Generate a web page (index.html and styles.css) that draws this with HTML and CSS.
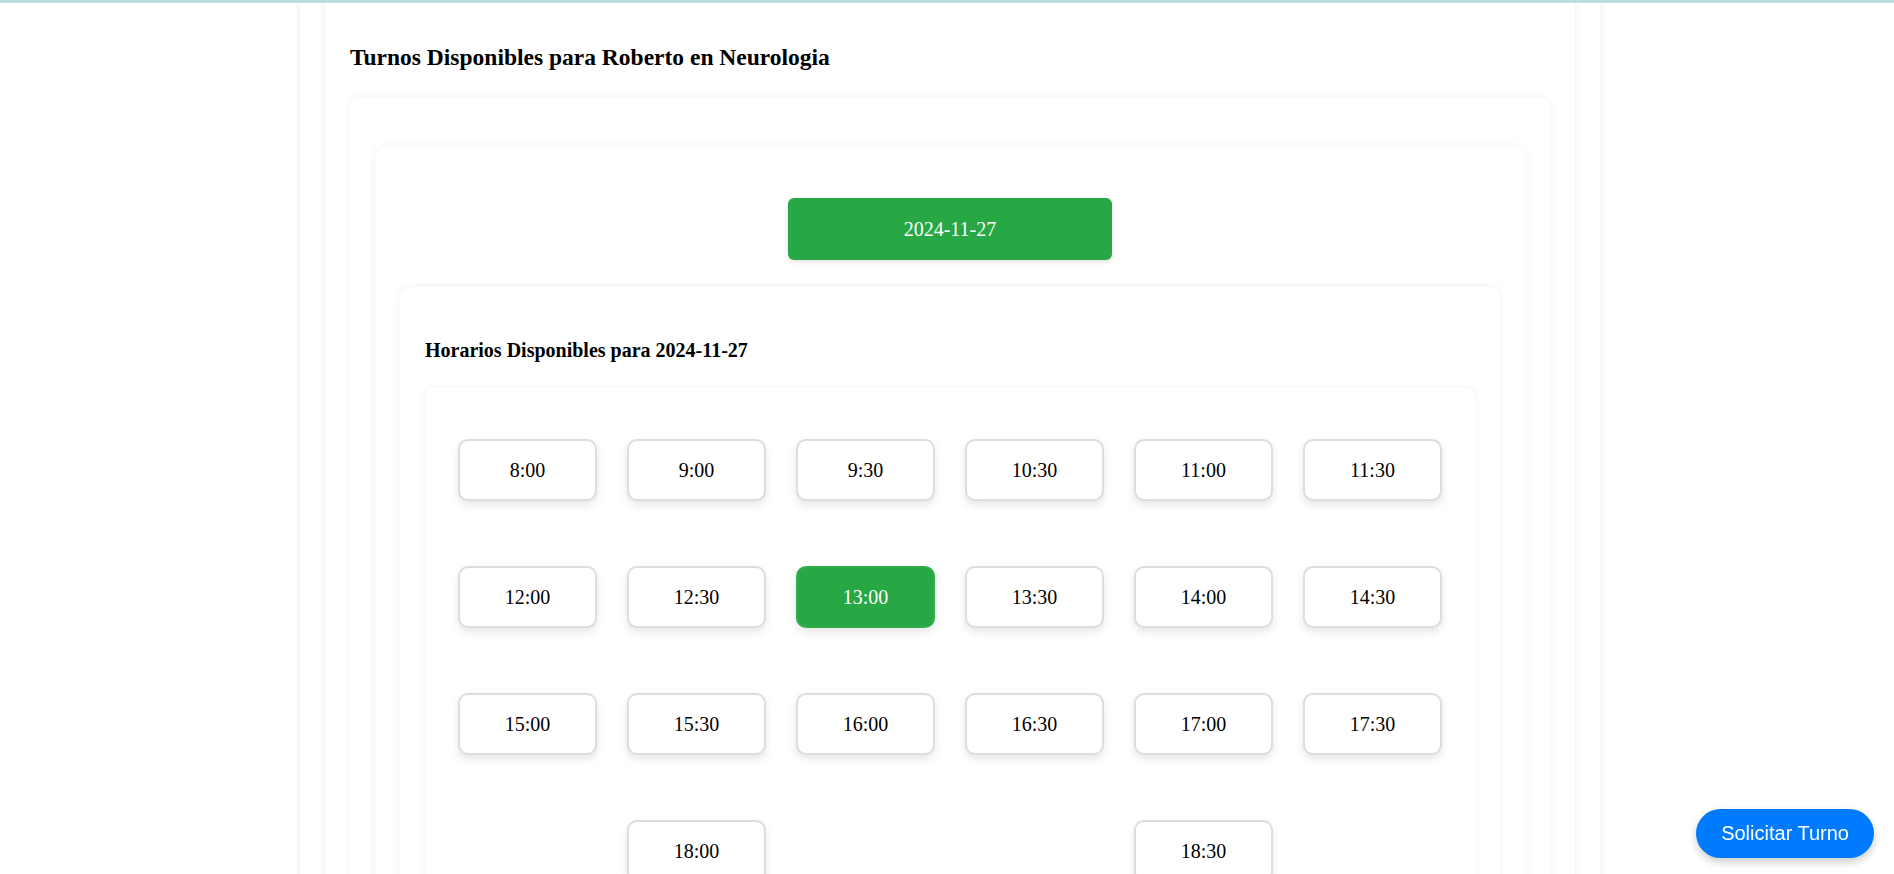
FILE: index.html
```html
<!DOCTYPE html>
<html lang="es">
<head>
<meta charset="utf-8">
<title>Turnos Disponibles</title>
<link rel="stylesheet" href="styles.css">
</head>
<body>
<div class="topbar"></div>
<div class="outer">
  <div class="inner">
    <h2 class="title">Turnos Disponibles para Roberto en Neurologia</h2>
    <div class="card card-main">
      <div class="card card-dates">
        <div class="date-row">
          <button class="date-btn">2024-11-27</button>
        </div>
        <div class="card card-hours">
          <h3 class="subtitle">Horarios Disponibles para 2024-11-27</h3>
          <div class="card card-grid">
            <div class="slots">
              <button class="slot">8:00</button>
              <button class="slot">9:00</button>
              <button class="slot">9:30</button>
              <button class="slot">10:30</button>
              <button class="slot">11:00</button>
              <button class="slot">11:30</button>
              <button class="slot">12:00</button>
              <button class="slot">12:30</button>
              <button class="slot selected">13:00</button>
              <button class="slot">13:30</button>
              <button class="slot">14:00</button>
              <button class="slot">14:30</button>
              <button class="slot">15:00</button>
              <button class="slot">15:30</button>
              <button class="slot">16:00</button>
              <button class="slot">16:30</button>
              <button class="slot">17:00</button>
              <button class="slot">17:30</button>
              <button class="slot">18:00</button>
              <button class="slot">18:30</button>
            </div>
          </div>
        </div>
      </div>
    </div>
  </div>
</div>
<button class="request-btn">Solicitar Turno</button>
</body>
</html>
```
FILE: styles.css
```css
html, body {
  margin: 0;
  padding: 0;
  background: #ffffff;
}

body {
  font-family: "Liberation Serif", "Times New Roman", serif;
  color: #000;
  padding-left: 6px;
  overflow: hidden;
  height: 874px;
}

.topbar {
  position: fixed;
  top: 0;
  left: 0;
  right: 0;
  height: 3px;
  background: #b9dfe0;
  z-index: 5;
}

.outer {
  width: 1300px;
  margin: 0 auto;
  padding: 0 25px;
  box-sizing: border-box;
  background: #fff;
  box-shadow: 0 0 8px rgba(0, 0, 0, 0.07);
  clip-path: inset(0 -20px -20px -20px);
  min-height: 900px;
}

.inner {
  background: #fff;
  padding: 44px 25px 0;
  box-shadow: 0 0 8px rgba(0, 0, 0, 0.07);
  clip-path: inset(0 -20px -20px -20px);
  min-height: 900px;
}

.title {
  margin: 0 0 26px;
  font-size: 23.5px;
  font-weight: bold;
}

.card {
  background: #fff;
  border-radius: 10px;
  box-shadow: 0 0 10px rgba(0, 0, 0, 0.06);
}

.card-main {
  padding: 50px 25px 25px;
}

.card-dates {
  padding: 51px 25px 25px;
}

.date-row {
  display: flex;
  justify-content: center;
  margin-bottom: 27px;
}

.date-btn {
  width: 324px;
  height: 62px;
  border: none;
  border-radius: 6px;
  background: #28a745;
  color: #fff;
  font-family: "Liberation Serif", "Times New Roman", serif;
  font-size: 20px;
  box-shadow: 0 2px 5px rgba(0, 0, 0, 0.12);
  cursor: pointer;
}

.card-hours {
  padding: 52px 25px 25px;
}

.subtitle {
  margin: 0 0 26px;
  font-size: 20px;
  font-weight: bold;
}

.card-grid {
  padding: 36px 18px 21px;
}

.slots {
  display: flex;
  flex-wrap: wrap;
  justify-content: space-around;
  row-gap: 35px;
}

.slot {
  width: 139px;
  height: 62px;
  margin: 15px;
  box-sizing: border-box;
  background: #fff;
  border: 2px solid #dddddd;
  border-radius: 10px;
  box-shadow: 0 4px 8px rgba(0, 0, 0, 0.1);
  font-family: "Liberation Serif", "Times New Roman", serif;
  font-size: 20px;
  color: #000;
  cursor: pointer;
}

.slot.selected {
  background: #28a745;
  border-color: #2fae4c;
  color: #fff;
}

.request-btn {
  position: fixed;
  right: 20px;
  bottom: 16px;
  height: 49px;
  padding: 0 25px;
  border: none;
  border-radius: 25px;
  background: #007bff;
  color: #fff;
  font-family: "Liberation Sans", Arial, sans-serif;
  font-size: 20px;
  box-shadow: 0 4px 8px rgba(0, 0, 0, 0.2);
  cursor: pointer;
}
```
